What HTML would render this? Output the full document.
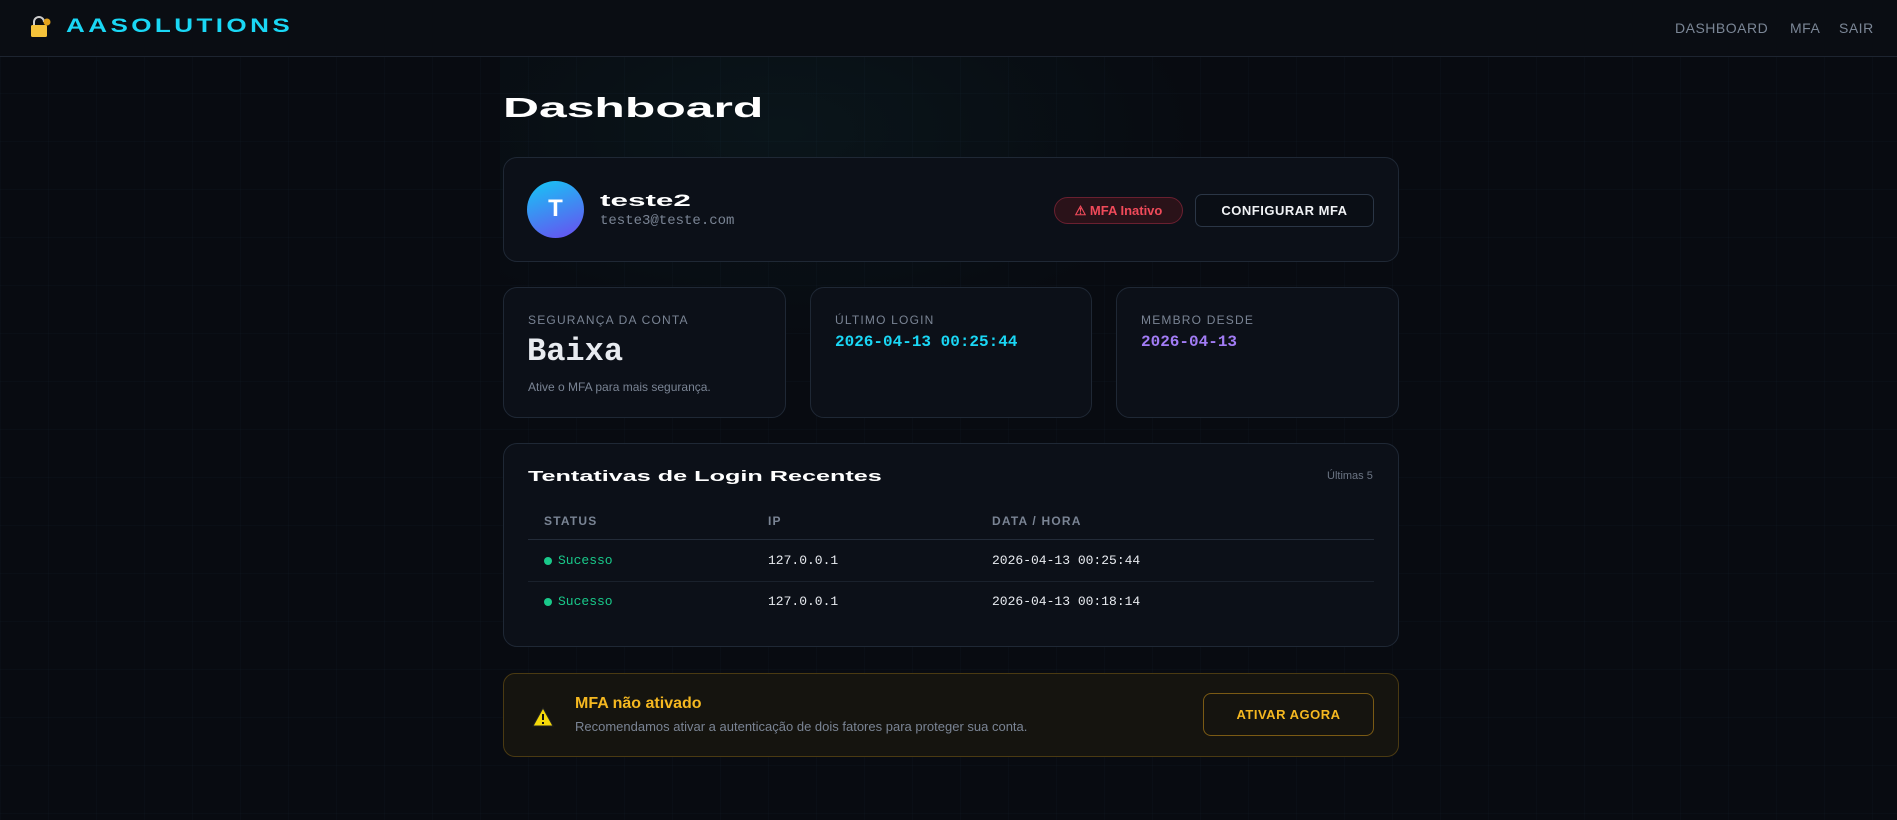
<!DOCTYPE html>
<html><head><meta charset="utf-8"><style>
*{margin:0;padding:0;box-sizing:border-box}
body{width:1897px;height:820px;overflow:hidden;background:#080b11;font-family:"Liberation Sans",sans-serif;position:relative;color:#e6e9ef}
.bg{position:absolute;inset:0;background-image:linear-gradient(rgba(40,60,80,.08) 1px,transparent 1px),linear-gradient(90deg,rgba(40,60,80,.08) 1px,transparent 1px);background-size:48px 48px;background-position:0 45px}
.glow{position:absolute;left:500px;top:40px;width:700px;height:300px;background:radial-gradient(ellipse at 40% 30%,rgba(20,80,80,.15),transparent 70%)}
.a{position:absolute}
.hdr{position:absolute;left:0;top:0;width:1897px;height:57px;background:#0a0d13;border-bottom:1px solid #1d2430}
.card{position:absolute;background:#0c1018;border:1px solid #1f2835;border-radius:14px}
.mono{font-family:"Liberation Mono",monospace}
.wide{font-weight:900;letter-spacing:1px}
.lbl{font-size:12px;letter-spacing:1.2px;color:#7a8494}
</style></head><body>
<div class="bg"></div><div class="glow"></div>
<div class="hdr"></div>
<svg class="a" style="left:30px;top:16px" width="22" height="22" viewBox="0 0 22 22"><path d="M4 10V6a5 5 0 0 1 10 0" stroke="#ccc" stroke-width="2" fill="none"/><rect x="1" y="9" width="16" height="12" rx="1.5" fill="#f5c23a"/><circle cx="17" cy="6" r="3.5" fill="#e3a21a"/></svg>
<div class="a wide" style="left:66px;top:16px;font-size:19px;color:#1ad7f5;letter-spacing:2.5px;transform:scaleX(1.37);transform-origin:left">AASOLUTIONS</div>
<div class="a" style="left:1675px;top:20px;font-size:14px;color:#7b8696;letter-spacing:.5px">DASHBOARD</div>
<div class="a" style="left:1790px;top:20px;font-size:14px;color:#7b8696;letter-spacing:.5px">MFA</div>
<div class="a" style="left:1839px;top:20px;font-size:14px;color:#7b8696;letter-spacing:.5px">SAIR</div>

<div class="a wide" style="left:503px;top:92px;font-size:28px;color:#fff;transform:scaleX(1.78);transform-origin:left;letter-spacing:0">Dashboard</div>

<div class="card" style="left:503px;top:157px;width:896px;height:105px"></div>
<div class="a" style="left:527px;top:181px;width:57px;height:57px;border-radius:50%;background:linear-gradient(160deg,#14c8f5,#6b4cf0)"></div>
<div class="a wide" style="left:544px;top:195px;font-size:24px;color:#fff;width:24px;text-align:center">T</div>
<div class="a wide" style="left:600px;top:191px;font-size:17px;color:#fff;transform:scaleX(1.85);transform-origin:left;letter-spacing:0">teste2</div>
<div class="a mono" style="left:600px;top:213px;font-size:14px;color:#7a8494">teste3@teste.com</div>
<div class="a" style="left:1054px;top:197px;width:129px;height:27px;border-radius:14px;background:#2a1219;border:1px solid #6a2030;color:#f04a5a;font-size:13px;font-weight:bold;text-align:center;line-height:25px">⚠ MFA Inativo</div>
<div class="a" style="left:1195px;top:194px;width:179px;height:33px;border-radius:7px;border:1px solid #2b3646;background:#0a0e15;color:#f0f2f5;font-size:13px;font-weight:bold;text-align:center;line-height:31px;letter-spacing:.5px">CONFIGURAR MFA</div>

<div class="card" style="left:503px;top:287px;width:283px;height:131px"></div>
<div class="card" style="left:810px;top:287px;width:282px;height:131px"></div>
<div class="card" style="left:1116px;top:287px;width:283px;height:131px"></div>
<div class="a lbl" style="left:528px;top:313px">SEGURANÇA DA CONTA</div>
<div class="a mono" style="left:527px;top:333px;font-size:32px;font-weight:bold;color:#e8ebf0">Baixa</div>
<div class="a" style="left:528px;top:380px;font-size:12px;color:#7a8494">Ative o MFA para mais segurança.</div>
<div class="a lbl" style="left:835px;top:313px">ÚLTIMO LOGIN</div>
<div class="a mono" style="left:835px;top:333px;font-size:16px;font-weight:bold;color:#1ad7f5">2026-04-13 00:25:44</div>
<div class="a lbl" style="left:1141px;top:313px">MEMBRO DESDE</div>
<div class="a mono" style="left:1141px;top:333px;font-size:16px;font-weight:bold;color:#a27cf5">2026-04-13</div>

<div class="card" style="left:503px;top:443px;width:896px;height:204px"></div>
<div class="a wide" style="left:528px;top:468px;font-size:15px;color:#fff;transform:scaleX(1.68);transform-origin:left;letter-spacing:0">Tentativas de Login Recentes</div>
<div class="a" style="left:1327px;top:470px;font-size:11px;color:#6c7584">Últimas 5</div>
<div class="a lbl" style="left:544px;top:514px;font-weight:bold">STATUS</div>
<div class="a lbl" style="left:768px;top:514px;font-weight:bold">IP</div>
<div class="a lbl" style="left:992px;top:514px;font-weight:bold">DATA / HORA</div>
<div class="a" style="left:528px;top:539px;width:846px;height:1px;background:#232b38"></div>
<div class="a" style="left:528px;top:581px;width:846px;height:1px;background:#1a212c"></div>
<div class="a" style="left:544px;top:557px;width:8px;height:8px;border-radius:50%;background:#19c98a"></div>
<div class="a mono" style="left:558px;top:553px;font-size:13px;color:#19c98a">Sucesso</div>
<div class="a mono" style="left:768px;top:553px;font-size:13px;color:#e8ebf0">127.0.0.1</div>
<div class="a mono" style="left:992px;top:553px;font-size:13px;color:#e8ebf0">2026-04-13 00:25:44</div>
<div class="a" style="left:544px;top:598px;width:8px;height:8px;border-radius:50%;background:#19c98a"></div>
<div class="a mono" style="left:558px;top:594px;font-size:13px;color:#19c98a">Sucesso</div>
<div class="a mono" style="left:768px;top:594px;font-size:13px;color:#e8ebf0">127.0.0.1</div>
<div class="a mono" style="left:992px;top:594px;font-size:13px;color:#e8ebf0">2026-04-13 00:18:14</div>

<div class="a" style="left:503px;top:673px;width:896px;height:84px;border-radius:12px;background:#15140f;border:1px solid #4a3a12"></div>
<svg class="a" style="left:532px;top:707px" width="22" height="20" viewBox="0 0 22 20"><path d="M11 1L21 19H1Z" fill="#f5d90a" stroke="#222" stroke-width="1"/><rect x="10" y="7" width="2" height="6" fill="#111"/><rect x="10" y="15" width="2" height="2" fill="#111"/></svg>
<div class="a" style="left:575px;top:695px;font-size:16px;font-weight:bold;color:#f5b820">MFA não ativado</div>
<div class="a" style="left:575px;top:719px;font-size:13px;color:#7a8494">Recomendamos ativar a autenticação de dois fatores para proteger sua conta.</div>
<div class="a" style="left:1203px;top:693px;width:171px;height:43px;border-radius:8px;border:1px solid #7a5a14;color:#f5b820;font-size:13px;font-weight:bold;text-align:center;line-height:41px;letter-spacing:.5px">ATIVAR AGORA</div>
</body></html>
